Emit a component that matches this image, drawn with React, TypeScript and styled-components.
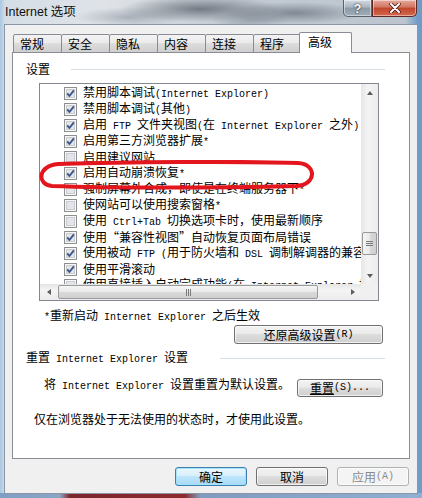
import styled, { createGlobalStyle } from 'styled-components';

const CJK = `"Noto Sans CJK SC", "Noto Sans", sans-serif`;

const GlobalStyle = createGlobalStyle`
  html, body {
    margin: 0;
    padding: 0;
  }
  body {
    background: #9fb6cc;
    font-family: ${CJK};
    font-size: 12px;
    color: #000;
  }
`;

// aero glass: blurred blue-grey with a red smear along the bottom
const Frame = styled.div`
  width: 422px;
  height: 498px;
  overflow: hidden;
  position: relative;
  display: flex;
  flex-direction: column;
  background:
    linear-gradient(to right, #7f9fc4 0, #8aa5c4 60px, #7c262b 70px, #8d2a2f 185px, #7f9bbd 200px, #8fb0d2 100%) 0 493px / 100% 5px no-repeat,
    radial-gradient(ellipse 80px 13px at 200px 9px, rgba(60, 66, 78, 0.6), transparent),
    radial-gradient(ellipse 70px 11px at 295px 13px, rgba(75, 84, 98, 0.55), transparent),
    radial-gradient(ellipse 55px 10px at 130px 17px, rgba(110, 120, 135, 0.45), transparent),
    radial-gradient(ellipse 40px 9px at 250px 20px, rgba(95, 105, 120, 0.4), transparent),
    linear-gradient(to right, #a9c6e2 0, #d4dde6 5px, #dfe3e8 25%, #c3cad2 55%, #bcc5cf 96%, #6f9bc8 99%, #6f9bc8 100%);
`;

const TitleBar = styled.div`
  height: 24px;
  display: flex;
  align-items: flex-start;
  padding-left: 5px;
`;

const Title = styled.div`
  margin-top: 3px;
  font-size: 12.5px;
  line-height: 18px;
  color: #111;
  font-family: "Liberation Sans", ${CJK};
`;

const CaptionGroup = styled.div`
  display: flex;
  margin-left: auto;
  margin-right: 5px;
`;

const CaptionBtn = styled.div<{ $close?: boolean }>`
  width: ${(p) => (p.$close ? 45 : 29)}px;
  height: 17px;
  box-sizing: border-box;
  display: flex;
  align-items: center;
  justify-content: center;
  border: 1px solid ${(p) => (p.$close ? '#5b2a25' : '#56636f')};
  border-top: none;
  border-radius: ${(p) => (p.$close ? '0 0 5px 0' : '0 0 0 5px')};
  background: ${(p) =>
    p.$close
      ? 'linear-gradient(#e6a99c, #d27461 45%, #c0452d 50%, #d3694d)'
      : 'linear-gradient(#d3dae1, #aab5c0 45%, #8c9aa8 50%, #a0adb9)'};
  box-shadow: inset 0 0 0 1px rgba(255, 255, 255, 0.45);
  color: #fff;
  font-family: "Liberation Sans", sans-serif;
  font-weight: bold;
  font-size: 13px;
  text-shadow: 0 0 2px #333, 0 0 1px #222;
`;

const Client = styled.div`
  margin: 0 4px;
  height: 470px;
  box-sizing: border-box;
  border: 1px solid #8a96a3;
  background: #f0f0f0;
  padding: 7px 8px 0 7px;
  display: flex;
  flex-direction: column;
`;

const TabStrip = styled.div`
  display: flex;
  align-items: flex-end;
  height: 21px;
  padding-left: 1px;
  margin-bottom: -1px;
`;

const Tab = styled.div<{ $active?: boolean }>`
  box-sizing: border-box;
  width: ${(p) => (p.$active ? 53 : 49)}px;
  height: ${(p) => (p.$active ? 21 : 19)}px;
  margin-right: -1px;
  margin-left: ${(p) => (p.$active ? -2 : 0)}px;
  padding-left: ${(p) => (p.$active ? 8 : 6)}px;
  padding-bottom: ${(p) => (p.$active ? 2 : 0)}px;
  display: flex;
  align-items: center;
  border: 1px solid #898c95;
  border-bottom: ${(p) => (p.$active ? 'none' : '1px solid #898c95')};
  border-radius: 2px 2px 0 0;
  position: relative;
  z-index: ${(p) => (p.$active ? 2 : 1)};
  background: ${(p) =>
    p.$active ? '#fff' : 'linear-gradient(#f3f3f3, #ebebeb 45%, #dddddd 50%, #cfcfcf)'};
  font-size: 12px;
  line-height: 16px;
`;

const Panel = styled.div`
  position: relative;
  width: 398px;
  height: 407px;
  box-sizing: border-box;
  border: 1px solid #898c95;
  background: #fff;
  display: flex;
  flex-direction: column;
`;

const GroupHeader = styled.div<{ $top: number; $gap: number }>`
  display: flex;
  align-items: center;
  margin-top: ${(p) => p.$top}px;
  padding: 0 24px 0 13px;
  gap: ${(p) => p.$gap}px;
  height: 16px;
  line-height: 16px;
  white-space: nowrap;
`;

const GroupLine = styled.div`
  flex: 1;
  height: 1px;
  background: #d5dfe5;
`;

const Latin = styled.span`
  font-family: "Liberation Mono", monospace;
  font-size: 10px;
  white-space: pre;
`;

const Han = styled.span`
  font-family: ${CJK};
  font-size: 12px;
`;

const ListBox = styled.div`
  margin: 6px 0 0 26px;
  width: 340px;
  height: 218px;
  box-sizing: border-box;
  border: 1px solid #828790;
  display: grid;
  grid-template-columns: 1fr 17px;
  grid-template-rows: 1fr 16px;
`;

const Items = styled.div`
  overflow: hidden;
  padding-top: 1px;
`;

const Row = styled.div`
  display: flex;
  align-items: center;
  height: 16px;
  line-height: 16px;
  padding-left: 24px;
  gap: 6px;
  white-space: nowrap;
`;

const VScroll = styled.div`
  display: flex;
  flex-direction: column;
  background: linear-gradient(to right, #e6e6e6, #f4f4f4 40%, #ececec);
`;

const HScroll = styled.div`
  display: flex;
  background: linear-gradient(#e6e6e6, #f4f4f4 40%, #ececec);
`;

const Corner = styled.div`
  background: #f0f0f0;
`;

const ArrowBox = styled.div<{ $h?: number }>`
  width: 17px;
  height: ${(p) => p.$h ?? 17}px;
  flex: none;
  display: flex;
  align-items: center;
  justify-content: center;
`;

const VTrack = styled.div`
  flex: 1;
  display: flex;
  flex-direction: column;
`;

const HTrack = styled.div`
  flex: 1;
  display: flex;
`;

const VThumb = styled.div<{ $offset: number }>`
  margin: ${(p) => p.$offset}px 1px 0 1px;
  height: 23px;
  box-sizing: border-box;
  border: 1px solid #9a9a9a;
  border-radius: 2px;
  background: linear-gradient(to right, #f5f5f5, #e9e9e9 50%, #d9d9d9 50%, #d0d0d0);
  display: flex;
  align-items: center;
  justify-content: center;
`;

const HThumb = styled.div<{ $offset: number; $len: number }>`
  margin: 1px 0 1px ${(p) => p.$offset}px;
  width: ${(p) => p.$len}px;
  box-sizing: border-box;
  border: 1px solid #9a9a9a;
  border-radius: 2px;
  background: linear-gradient(#f5f5f5, #e9e9e9 50%, #d9d9d9 50%, #d0d0d0);
  display: flex;
  align-items: center;
  justify-content: center;
`;

const Note = styled.div<{ $top: number; $left: number }>`
  margin: ${(p) => p.$top}px 0 0 ${(p) => p.$left}px;
  height: 16px;
  line-height: 16px;
  white-space: nowrap;
`;

const Button = styled.div<{ $w: number; $default?: boolean; $disabled?: boolean }>`
  width: ${(p) => p.$w}px;
  height: 19px;
  box-sizing: border-box;
  flex: none;
  display: flex;
  align-items: center;
  justify-content: center;
  border-radius: 3px;
  line-height: 16px;
  white-space: nowrap;
  border: 1px solid ${(p) => (p.$default ? '#3c7fb1' : p.$disabled ? '#adb2b5' : '#707070')};
  background: ${(p) =>
    p.$default
      ? 'linear-gradient(#eaf6fd, #d9f0fc 45%, #bee6fd 50%, #a7d9f5)'
      : p.$disabled
        ? '#f4f4f4'
        : 'linear-gradient(#f2f2f2, #ebebeb 45%, #dddddd 50%, #cfcfcf)'};
  box-shadow: inset 0 0 0 1px ${(p) => (p.$default ? 'rgba(160, 225, 250, 0.9)' : 'rgba(255, 255, 255, 0.7)')};
  color: ${(p) => (p.$disabled ? '#8a8a8a' : '#000')};
`;

const RestoreRow = styled.div`
  display: flex;
  justify-content: flex-end;
  margin: 2px 26px 0 0;
`;

const ResetRow = styled.div`
  display: flex;
  align-items: flex-start;
  justify-content: space-between;
  margin-top: 10px;
  padding: 0 26px 0 31px;
  line-height: 16px;
  white-space: nowrap;
`;

const ResetButton = styled(Button)`
  margin-top: 3px;
  height: 18px;
`;

const Underlined = styled.span`
  text-decoration: underline;
`;

const Annotation = styled.svg`
  position: absolute;
  left: 23px;
  top: 107px;
  pointer-events: none;
`;

const Footer = styled.div`
  display: flex;
  justify-content: flex-end;
  gap: 9px;
  margin-top: 8px;
`;

type Item = { on: boolean; text: string };

const items: Item[] = [
  { on: true, text: '禁用脚本调试(Internet Explorer)' },
  { on: true, text: '禁用脚本调试(其他)' },
  { on: true, text: '启用 FTP 文件夹视图(在 Internet Explorer 之外)' },
  { on: true, text: '启用第三方浏览器扩展*' },
  { on: false, text: '启用建议网站' },
  { on: true, text: '启用自动崩溃恢复*' },
  { on: false, text: '强制屏幕外合成，即使是在终端服务器下*' },
  { on: false, text: '使网站可以使用搜索窗格*' },
  { on: false, text: '使用 Ctrl+Tab 切换选项卡时，使用最新顺序' },
  { on: true, text: '使用“兼容性视图”自动恢复页面布局错误' },
  { on: true, text: '使用被动 FTP (用于防火墙和 DSL 调制解调器的兼容性)' },
  { on: true, text: '使用平滑滚动' },
  { on: false, text: '使用直接插入自动完成功能(在 Internet Explorer 地址栏和打开对话框中)' },
];

const tabs = ['常规', '安全', '隐私', '内容', '连接', '程序', '高级'];

// ascii runs get the half-width mono face, the rest the CJK face
const Mixed = ({ text }: { text: string }) => (
  <>
    {(text.match(/[ -~]+|[^ -~]+/g) ?? []).map((part, i) =>
      /^[ -~]/.test(part) ? <Latin key={i}>{part}</Latin> : <Han key={i}>{part}</Han>
    )}
  </>
);

const Check = ({ on }: { on: boolean }) => (
  <svg width="13" height="13" viewBox="0 0 13 13" style={{ flex: 'none' }}>
    <rect x="0.5" y="0.5" width="12" height="12" fill="#f7f7f7" stroke="#8e8f8f" />
    <rect x="2.5" y="2.5" width="8" height="8" fill="#e2e5e9" stroke="#c9ccd1" />
    {on && (
      <path d="M3.2 6.4 L5.4 9 L9.9 3.4" fill="none" stroke="#3a5488" strokeWidth="1.9" strokeLinejoin="round" />
    )}
  </svg>
);

const Arrow = ({ dir }: { dir: 'up' | 'down' | 'left' | 'right' }) => {
  const pts = {
    up: '1,5 4,1 7,5',
    down: '1,1 4,5 7,1',
    left: '5,1 1,4 5,7',
    right: '1,1 5,4 1,7',
  }[dir];
  const vertical = dir === 'up' || dir === 'down';
  return (
    <svg width={vertical ? 8 : 6} height={vertical ? 6 : 8}>
      <polygon points={pts} fill="#5d5d5d" />
    </svg>
  );
};

export default function App() {
  return (
    <>
      <GlobalStyle />
      <Frame>
        <TitleBar>
          <Title>Internet 选项</Title>
          <CaptionGroup>
            <CaptionBtn>?</CaptionBtn>
            <CaptionBtn $close>
              <svg width="12" height="10" viewBox="0 0 12 10">
                <path d="M2 1 L10 9 M10 1 L2 9" stroke="#3a1510" strokeWidth="3.4" strokeLinecap="round" />
                <path d="M2 1 L10 9 M10 1 L2 9" stroke="#fff" strokeWidth="2" strokeLinecap="round" />
              </svg>
            </CaptionBtn>
          </CaptionGroup>
        </TitleBar>
        <Client>
          <TabStrip>
            {tabs.map((t) => (
              <Tab key={t} $active={t === '高级'}>
                {t}
              </Tab>
            ))}
          </TabStrip>
          <Panel>
            <GroupHeader $top={8} $gap={21}>
              <span>设置</span>
              <GroupLine />
            </GroupHeader>
            <ListBox>
              <Items>
                {items.map((it, i) => (
                  <Row key={i}>
                    <Check on={it.on} />
                    <span>
                      <Mixed text={it.text} />
                    </span>
                  </Row>
                ))}
              </Items>
              <VScroll>
                <ArrowBox>
                  <Arrow dir="up" />
                </ArrowBox>
                <VTrack>
                  <VThumb $offset={131}>
                    <svg width="7" height="7">
                      <path d="M0 1.5 H7 M0 3.5 H7 M0 5.5 H7" stroke="#7a7a7a" strokeWidth="1" />
                    </svg>
                  </VThumb>
                </VTrack>
                <ArrowBox>
                  <Arrow dir="down" />
                </ArrowBox>
              </VScroll>
              <HScroll>
                <ArrowBox $h={16}>
                  <Arrow dir="left" />
                </ArrowBox>
                <HTrack>
                  <HThumb $offset={1} $len={260}>
                    <svg width="7" height="7">
                      <path d="M1.5 0 V7 M3.5 0 V7 M5.5 0 V7" stroke="#7a7a7a" strokeWidth="1" />
                    </svg>
                  </HThumb>
                </HTrack>
                <ArrowBox $h={16}>
                  <Arrow dir="right" />
                </ArrowBox>
              </HScroll>
              <Corner />
            </ListBox>
            <Note $top={6} $left={31}>
              <Mixed text="*重新启动 Internet Explorer 之后生效" />
            </Note>
            <RestoreRow>
              <Button $w={149}>
                <Mixed text="还原高级设置(R)" />
              </Button>
            </RestoreRow>
            <GroupHeader $top={6} $gap={32}>
              <span>
                <Mixed text="重置 Internet Explorer 设置" />
              </span>
              <GroupLine />
            </GroupHeader>
            <ResetRow>
              <span>
                <Mixed text="将 Internet Explorer 设置重置为默认设置。" />
              </span>
              <ResetButton $w={86}>
                <Underlined>
                  <Han>重置</Han>
                </Underlined>
                <Latin>(S)...</Latin>
              </ResetButton>
            </ResetRow>
            <Note $top={14} $left={21}>
              仅在浏览器处于无法使用的状态时，才使用此设置。
            </Note>
            <Annotation width="280" height="30" viewBox="0 0 280 30">
              <path
                d="M22 4 C90 2, 200 1, 262 3 C281 4, 281 25, 260 26 C180 28, 70 28, 16 26 C1 25, 1 6, 22 4 Z"
                fill="none"
                stroke="#e3161e"
                strokeWidth="4"
              />
            </Annotation>
          </Panel>
          <Footer>
            <Button $w={72} $default>
              确定
            </Button>
            <Button $w={72}>取消</Button>
            <Button $w={72} $disabled>
              <Mixed text="应用(A)" />
            </Button>
          </Footer>
        </Client>
      </Frame>
    </>
  );
}
